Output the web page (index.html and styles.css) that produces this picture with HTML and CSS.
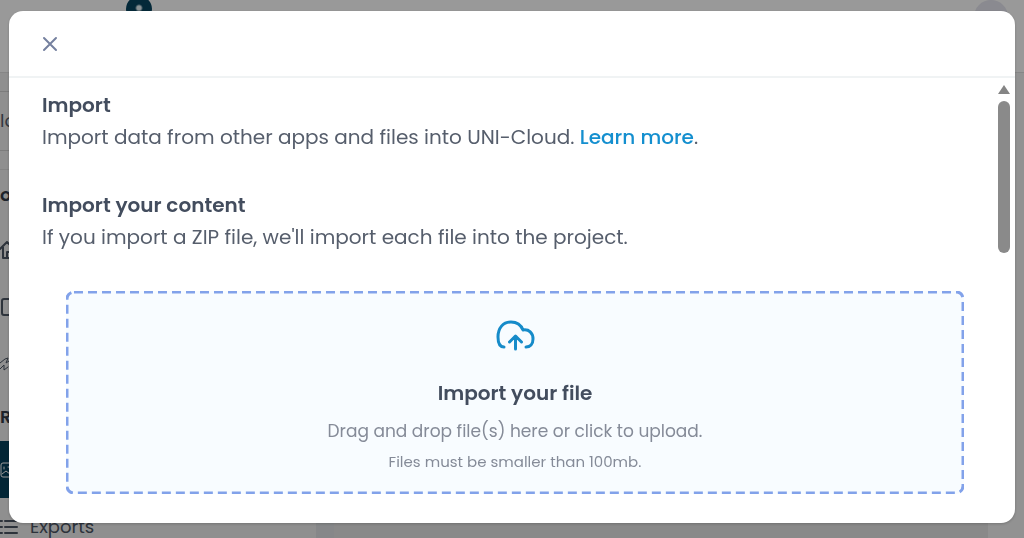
FILE: index.html
```
<!DOCTYPE html>
<html lang="en">
<head>
<title>Import</title>
<meta charset="utf-8">
<meta name="viewport" content="width=device-width, initial-scale=1">
<link rel="stylesheet" href="styles.css">
</head>
<body>
<div class="app">
	<header class="topbar">
		<span class="brand"></span>
		<span class="avatar"></span>
	</header>
	<div class="workspace">
		<nav class="sidebar">
			<div class="picker">lo</div>
			<div class="group first">oc</div>
			<a class="item" href="#" aria-label="Home">
				<svg width="18" height="18" viewBox="0 0 18 18"><path d="M0 8 7 1l7 7M3 6v11h9V6M7 17v-6h3"/></svg>
			</a>
			<a class="item" href="#" aria-label="Documents">
				<svg width="18" height="18" viewBox="0 0 18 18"><path d="M14 1H4Q2 1 2 3v12q0 2 2 2h10"/></svg>
			</a>
			<a class="item" href="#" aria-label="Activity">
				<svg class="thin" width="18" height="18" viewBox="0 0 18 18"><path d="m0 8 5-4 3-1-2 5 3-2M0 14l4-4v5l4-3"/></svg>
			</a>
			<div class="group">R</div>
			<a class="item active" href="#" aria-label="Imports">
				<svg class="thin" width="18" height="18" viewBox="0 0 18 18"><path d="M14 2H3Q1 2 1 4v10q0 2 2 2h11M4 6v2M2 13l4-3 4 3M8 6h2"/></svg>
			</a>
			<a class="item" href="#">
				<svg width="18" height="18" viewBox="0 0 18 18"><path d="M0 3h2M0 9h2M0 15h2M5 3h12M5 9h12M5 15h12"/></svg>
				<span>Exports</span>
			</a>
		</nav>
		<main class="canvas"></main>
	</div>
</div>

<div class="overlay">
	<section class="modal" role="dialog" aria-modal="true" aria-labelledby="title">
		<header class="modal-head">
			<button class="close" type="button" aria-label="Close">
				<svg width="16" height="16" viewBox="0 0 16 16"><path d="m2 2 12 12M14 2 2 14"/></svg>
			</button>
		</header>
		<div class="modal-body">
			<div class="content">
				<div class="intro">
					<h2 id="title">Import</h2>
					<p>Import data from other apps and files into UNI-Cloud. <a href="#">Learn more</a>.</p>
				</div>
				<div class="intro">
					<h2>Import your content</h2>
					<p>If you import a ZIP file, we'll import each file into the project.</p>
				</div>
				<button class="dropzone" type="button">
					<svg class="outline" aria-hidden="true"><rect x="1" y="1" rx="7"/></svg>
					<svg class="cloud" width="40" height="32" viewBox="0 0 40 32"><path d="M9 28C5 28 3 24 3 18 3 9 8 3 16 3c6 0 10 3 12 8 6-1 10 3 10 9 0 5-3 8-7 8M20.500 30V18M14.500 23l6-6 6 6"/></svg>
					<strong>Import your file</strong>
					<span class="hint">Drag and drop file(s) here or click to upload.</span>
					<small>Files must be smaller than 100mb.</small>
				</button>
			</div>
			<div class="scrollbar" aria-hidden="true">
				<div class="arrow"></div>
				<div class="thumb"></div>
			</div>
		</div>
	</section>
</div>
</body>
</html>
```
FILE: styles.css
```
* {
	box-sizing: border-box;
}
body {
	margin: 0;
	font-family: Poppins, Inter, sans-serif;
	color: #565e6c;
	overflow: hidden;
}
h2, p {
	margin: 0;
}
svg {
	fill: none;
	stroke: currentColor;
	stroke-linecap: round;
	stroke-linejoin: round;
}

/* page behind the dialog */
.app {
	display: flex;
	flex-direction: column;
	height: 100vh;
	overflow: hidden;
	background: #fff;
}
.topbar {
	display: flex;
	justify-content: space-between;
	flex: none;
	height: 73px;
	padding: 0 16px 0 126px;
	border-bottom: 1px solid #e0e0e0;
}
.brand {
	width: 26px;
	height: 26px;
	margin-top: -4px;
	border-radius: 50%;
	background: radial-gradient(circle at 13px 12px, #e8f3f7 2px, #07455f 4px);
}
.avatar {
	width: 34px;
	height: 34px;
	border-radius: 50%;
	background: #e6e6f0;
}
.workspace {
	display: flex;
	flex: 1;
}
.sidebar {
	width: 334px;
	flex: none;
	border-right: 18px solid #dfe2e5;
	background: #eee;
	font-size: 18px;
}
.picker {
	height: 60px;
	margin: 18px 0;
	border: solid #cfcfcf;
	border-width: 1px 0;
	line-height: 58px;
}
.group {
	height: 49px;
	line-height: 49px;
	font-weight: 600;
	color: #333b48;
}
.group.first {
	height: 52px;
	border-top: 1px solid #dcdcdc;
}
.item {
	display: flex;
	align-items: center;
	gap: 12px;
	height: 57px;
	color: #4b5563;
	text-decoration: none;
}
.item svg {
	stroke-width: 2;
}
.item .thin {
	stroke-width: 1;
}
.item.active {
	background: #04405a;
	color: #fff;
}
.canvas {
	flex: 1;
	background: #e4e4e4;
	border-right: 36px solid #f3f3f3;
}

/* dialog */
.overlay {
	position: fixed;
	inset: 0;
	display: flex;
	padding: 11px 9px 15px;
	background: rgba(0, 0, 0, .4);
}
.modal {
	display: flex;
	flex-direction: column;
	flex: 1;
	border-radius: 14px;
	background: #fff;
	box-shadow: 0 1px 3px rgba(0, 0, 0, .2);
	overflow: hidden;
}
.modal-head {
	flex: none;
	padding: 17px 25px 16px;
	border-bottom: 2px solid #f0f3f4;
}
.close {
	display: flex;
	padding: 8px;
	border: 0;
	background: none;
	color: #75809f;
}
.close svg {
	stroke-width: 2;
}
.modal-body {
	display: flex;
	flex: 1;
	min-height: 0;
}
.content {
	flex: 1;
	padding: 11px 29px 0 33px;
}
.intro {
	margin-bottom: 36px;
	font-size: 20px;
	line-height: 32px;
}
.intro h2 {
	font-size: 20px;
	font-weight: 600;
	color: #434d5e;
}
.intro a {
	color: #148fcf;
	font-weight: 500;
	text-decoration: none;
}
.dropzone {
	position: relative;
	display: flex;
	flex-direction: column;
	align-items: center;
	width: calc(100% - 24px);
	margin: 38px 0 0 24px;
	padding: 28px 20px 20px;
	border: 0;
	border-radius: 8px;
	background: #f8fcff;
	color: #858b98;
	font-family: inherit;
}
.outline {
	position: absolute;
	inset: 0;
	width: 100%;
	height: 100%;
	color: #82a2ea;
}
.outline rect {
	width: calc(100% - 2px);
	height: calc(100% - 2px);
	stroke-width: 3;
	stroke-linecap: butt;
	stroke-dasharray: 9 5;
}
.cloud {
	margin-bottom: 26px;
	stroke-width: 3;
	color: #168bc9;
}
.dropzone strong {
	font-size: 20px;
	line-height: 32px;
	font-weight: 600;
	color: #434d5e;
}
.hint {
	margin: 6px 0 3px;
	font-size: 17px;
	line-height: 32px;
}
.dropzone small {
	font-size: 15px;
	line-height: 24px;
}
.scrollbar {
	display: flex;
	flex-direction: column;
	align-items: center;
	gap: 7px;
	width: 22px;
	padding-top: 7px;
}
.arrow {
	width: 12px;
	height: 9px;
	background: #858585;
	clip-path: polygon(50% 0, 100% 100%, 0 100%);
}
.thumb {
	width: 12px;
	height: 152px;
	border-radius: 6px;
	background: #8a8a8a;
}
```
